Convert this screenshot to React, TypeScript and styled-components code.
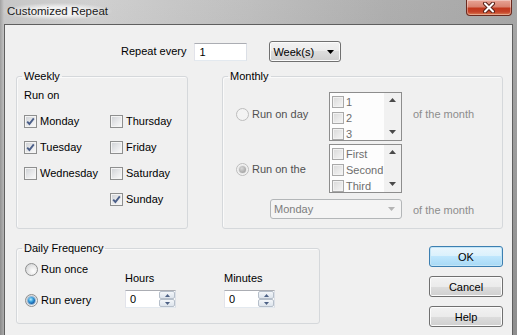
import React from "react";
import styled, { createGlobalStyle, css } from "styled-components";

const GlobalStyle = createGlobalStyle`
  html, body { margin: 0; padding: 0; background: #a9a9a9; }
  #root { width: 517px; height: 335px; }
`;

const FONT = `"Liberation Sans", Arial, sans-serif`;

const Window = styled.div`
  width: 517px;
  height: 335px;
  overflow: hidden;
  display: flex;
  flex-direction: column;
  font-family: ${FONT};
  font-size: 11px;
  color: #000;
  background:
    linear-gradient(to bottom, rgba(255,255,255,0.06), rgba(0,0,0,0.12)),
    linear-gradient(to right, #9c9c9c 0px, #c4c4c4 4px, #cdcdcd 18%, #bdbdbd 45%, #aaaaaa 75%, #a2a2a2 100%);
`;

const TitleBar = styled.div`
  height: 24px;
  flex: none;
  display: flex;
  align-items: flex-start;
`;

const Title = styled.div`
  margin: 3px 0 0 3px;
  padding: 1px 4px 2px 4px;
  font-size: 11.5px;
  line-height: 14px;
  color: #1a1a1a;
  background: radial-gradient(ellipse at center, rgba(255,255,255,0.75) 35%, rgba(255,255,255,0) 72%);
`;

const CloseButton = styled.div`
  margin-left: auto;
  margin-right: 5px;
  width: 46px;
  height: 16px;
  box-sizing: border-box;
  border: 1px solid #6a2a1f;
  border-top: none;
  border-radius: 0 0 4px 4px;
  display: flex;
  align-items: center;
  justify-content: center;
  background: linear-gradient(#e8a596 0%, #d98370 45%, #c2391d 55%, #c5432a 80%, #dd8458 100%);
  box-shadow: inset 0 0 0 1px rgba(255,255,255,0.35);
`;

const Client = styled.div`
  flex: 1;
  margin: 0 4px;
  border: 1px solid #5f5f5f;
  border-bottom: none;
  background: #f0f0f0;
  padding: 16px 9px 0 11px;
  display: flex;
  flex-direction: column;
`;

const TopRow = styled.div`
  display: flex;
  align-items: center;
  height: 21px;
  padding-left: 105px;
`;

const Text = styled.span<{ $tone?: "normal" | "dim" | "faint" }>`
  line-height: 13px;
  white-space: nowrap;
  color: ${(p) => (p.$tone === "dim" ? "#505050" : p.$tone === "faint" ? "#8d8d8d" : "#000")};
`;

const TextInput = styled.div`
  margin-left: 8px;
  width: 53px;
  height: 18px;
  box-sizing: border-box;
  border: 1px solid #abadb3;
  border-left-color: #e2e3ea;
  border-right-color: #dbdfe6;
  border-bottom-color: #e3e9ef;
  background: #fff;
  padding-left: 4px;
  display: flex;
  align-items: center;
`;

const Combo = styled.div<{ $disabled?: boolean; $w: number }>`
  width: ${(p) => p.$w}px;
  height: ${(p) => (p.$disabled ? 20 : 21)}px;
  box-sizing: border-box;
  display: flex;
  align-items: center;
  justify-content: space-between;
  padding: 0 6px 0 3px;
  border-radius: 3px;
  ${(p) =>
    p.$disabled
      ? css`
          border: 1px solid #b3b6b8;
          background: #f4f4f4;
          color: #7d7d7d;
        `
      : css`
          border: 1px solid #707070;
          background: linear-gradient(#f2f2f2 0%, #ebebeb 50%, #dddddd 50%, #cfcfcf 100%);
          box-shadow: inset 0 0 0 1px #fbfbfb;
        `}
`;

const WeekCombo = styled(Combo)`
  margin-left: 22px;
`;

const MonthCombo = styled(Combo)`
  grid-column: 1 / 3;
  justify-self: end;
  align-self: end;
`;

const GroupsRow = styled.div`
  display: flex;
  justify-content: space-between;
  margin-top: 8px;
`;

const Group = styled.fieldset<{ $w: number; $pb: number }>`
  width: ${(p) => p.$w}px;
  box-sizing: border-box;
  margin: 0;
  min-width: 0;
  padding: 6px 7px ${(p) => p.$pb}px 7px;
  border: 1px solid #d5d8db;
  border-radius: 3px;
  box-shadow: inset 1px 1px 0 #fafafa;
`;

const Legend = styled.legend`
  padding: 0 2px;
  margin-left: -2px;
  font-size: 11px;
  line-height: 13px;
  color: #000;
`;

const DayGrid = styled.div`
  display: grid;
  grid-template-columns: 86px 1fr;
  grid-auto-rows: 16px;
  row-gap: 10px;
  margin-top: 11px;
`;

const CheckLabel = styled.label<{ $col?: number }>`
  display: flex;
  align-items: center;
  gap: 3px;
  ${(p) => (p.$col ? `grid-column: ${p.$col};` : "")}
`;

const Box = styled.span<{ $size: number; $disabled?: boolean }>`
  flex: none;
  width: ${(p) => p.$size}px;
  height: ${(p) => p.$size}px;
  box-sizing: border-box;
  display: flex;
  align-items: center;
  justify-content: center;
  border: 1px solid ${(p) => (p.$disabled ? "#a9a9a9" : "#8e8f8f")};
  box-shadow: inset 0 0 0 1px ${(p) => (p.$disabled ? "#f2f2f2" : "#f4f4f4")};
  background: ${(p) =>
    p.$disabled
      ? "linear-gradient(135deg, #d9d9d9, #f6f6f6)"
      : "linear-gradient(135deg, #cdd0d4 0%, #e6e7e9 50%, #fbfbfb 100%)"};
`;

const Circle = styled.span<{ $disabled?: boolean }>`
  flex: none;
  width: 13px;
  height: 13px;
  box-sizing: border-box;
  border-radius: 50%;
  display: flex;
  align-items: center;
  justify-content: center;
  border: 1px solid ${(p) => (p.$disabled ? "#bdbdbd" : "#8e8f8f")};
  background: ${(p) =>
    p.$disabled
      ? "#f3f3f3"
      : "radial-gradient(circle at 65% 65%, #ffffff 0%, #e9e9e9 45%, #c9cbce 100%)"};
`;

const Dot = styled.span<{ $disabled?: boolean }>`
  width: 7px;
  height: 7px;
  border-radius: 50%;
  background: ${(p) =>
    p.$disabled
      ? "radial-gradient(circle at 40% 35%, #d8d8d8 0%, #a8a8a8 70%, #8f8f8f 100%)"
      : "radial-gradient(circle at 40% 35%, #b9ecff 0%, #3ea6e0 35%, #125ea8 70%, #0b3a73 100%)"};
  box-shadow: 0 0 0 1px ${(p) => (p.$disabled ? "#e6e6e6" : "#8fb5d6")};
`;

const MonthGrid = styled.div`
  display: grid;
  grid-template-columns: 99px 73px 1fr;
  grid-template-rows: 49px 49px 23px;
  row-gap: 3px;
  margin-top: 3px;
`;

const RadioLabel = styled.label<{ $pad?: number; $dy?: number }>`
  display: flex;
  align-items: center;
  gap: 3px;
  padding-left: ${(p) => p.$pad ?? 0}px;
  margin-top: ${(p) => p.$dy ?? 0}px;
`;

const MonthText = styled.div<{ $dy?: number }>`
  display: flex;
  align-items: center;
  padding-left: 11px;
  margin-top: ${(p) => p.$dy ?? 0}px;
`;

const ListBox = styled.div`
  box-sizing: border-box;
  width: 73px;
  height: 49px;
  border: 1px solid #8d8d8d;
  background: #fdfdfd;
  display: flex;
  overflow: hidden;
`;

const ListItems = styled.div`
  flex: 1;
  padding: 1px 0 0 2px;
  display: flex;
  flex-direction: column;
  overflow: hidden;
`;

const ListItem = styled.div`
  height: 16px;
  flex: none;
  display: flex;
  align-items: center;
  gap: 2px;
  color: #6d6d6d;
`;

const ScrollBar = styled.div`
  width: 17px;
  flex: none;
  background: #f1f1f1;
  display: flex;
  flex-direction: column;
  justify-content: space-between;
  align-items: center;
  padding: 5px 0 6px;
  box-sizing: border-box;
`;

const BottomRow = styled.div`
  display: flex;
  justify-content: space-between;
  align-items: flex-start;
  margin-top: 13px;
`;

const DailyBody = styled.div`
  display: flex;
  align-items: flex-end;
`;

const RadioCol = styled.div`
  width: 101px;
  flex: none;
  display: flex;
  flex-direction: column;
  gap: 15px;
`;

const RadioRow = styled(RadioLabel)`
  height: 16px;
  padding-left: 1px;
`;

const FieldCol = styled.div<{ $w: number }>`
  width: ${(p) => p.$w}px;
  flex: none;
  display: flex;
  flex-direction: column;
  gap: 5px;
`;

const Spin = styled.div`
  width: 51px;
  height: 18px;
  box-sizing: border-box;
  border: 1px solid #abadb3;
  border-left-color: #e2e3ea;
  border-right-color: #dbdfe6;
  border-bottom-color: #e3e9ef;
  background: #fff;
  display: flex;
  align-items: center;
  padding-left: 4px;
  justify-content: space-between;
`;

const SpinButtons = styled.div`
  width: 16px;
  height: 16px;
  display: flex;
  flex-direction: column;
`;

const SpinBtn = styled.div`
  flex: 1;
  box-sizing: border-box;
  border: 1px solid #b6bfca;
  border-radius: 2px;
  background: linear-gradient(#f3f6f9, #dde4ec);
  display: flex;
  align-items: center;
  justify-content: center;
`;

const ButtonCol = styled.div`
  display: flex;
  flex-direction: column;
  gap: 9px;
  margin-top: 4px;
`;

const Button = styled.button<{ $default?: boolean }>`
  width: 74px;
  height: 21px;
  box-sizing: border-box;
  padding: 0;
  font-family: ${FONT};
  font-size: 11px;
  color: #000;
  border-radius: 3px;
  ${(p) =>
    p.$default
      ? css`
          border: 1px solid #3c7fb1;
          background: linear-gradient(#eaf6fd 0%, #d9f0fc 50%, #bee6fd 50%, #a7d9f5 100%);
          box-shadow: inset 0 0 0 1px #c4e5f6;
        `
      : css`
          border: 1px solid #707070;
          background: linear-gradient(#f2f2f2 0%, #ebebeb 50%, #dddddd 50%, #cfcfcf 100%);
          box-shadow: inset 0 0 0 1px #fbfbfb;
        `}
`;

const CheckMark = () => (
  <svg width="9" height="9" viewBox="0 0 9 9">
    <path d="M1.2 4.6 L3.4 7 L7.8 1.4" fill="none" stroke="#4b5f89" strokeWidth="1.9" />
  </svg>
);

const Tri = ({ up, color, w = 7 }: { up?: boolean; color: string; w?: number }) => {
  const h = Math.ceil(w / 2);
  return (
    <svg width={w} height={h} viewBox={`0 0 ${w} ${h}`}>
      <polygon points={up ? `0,${h} ${w},${h} ${w / 2},0` : `0,0 ${w},0 ${w / 2},${h}`} fill={color} />
    </svg>
  );
};

const Check = ({ label, checked, col }: { label: string; checked?: boolean; col?: number }) => (
  <CheckLabel $col={col}>
    <Box $size={13}>{checked && <CheckMark />}</Box>
    <Text>{label}</Text>
  </CheckLabel>
);

const List = ({ items }: { items: string[] }) => (
  <ListBox>
    <ListItems>
      {items.map((it) => (
        <ListItem key={it}>
          <Box $size={12} $disabled />
          <span>{it}</span>
        </ListItem>
      ))}
    </ListItems>
    <ScrollBar>
      <Tri up color="#4a4a4a" w={7} />
      <Tri color="#4a4a4a" w={7} />
    </ScrollBar>
  </ListBox>
);

const SpinField = ({ label, value, w }: { label: string; value: string; w: number }) => (
  <FieldCol $w={w}>
    <Text>{label}</Text>
    <Spin>
      <span>{value}</span>
      <SpinButtons>
        <SpinBtn>
          <Tri up color="#4d6185" w={5} />
        </SpinBtn>
        <SpinBtn>
          <Tri color="#4d6185" w={5} />
        </SpinBtn>
      </SpinButtons>
    </Spin>
  </FieldCol>
);

export default function App() {
  return (
    <>
      <GlobalStyle />
      <Window>
        <TitleBar>
          <Title>Customized Repeat</Title>
          <CloseButton>
            <svg width="14" height="11" viewBox="0 0 14 11">
              <path d="M3 1.5 L11 9.5 M11 1.5 L3 9.5" stroke="#5a2218" strokeWidth="4" strokeLinecap="round" />
              <path d="M3 1.5 L11 9.5 M11 1.5 L3 9.5" stroke="#ffffff" strokeWidth="2" strokeLinecap="round" />
            </svg>
          </CloseButton>
        </TitleBar>
        <Client>
          <TopRow>
            <Text>Repeat every</Text>
            <TextInput>1</TextInput>
            <WeekCombo $w={72}>
              <span>Week(s)</span>
              <Tri color="#000" w={7} />
            </WeekCombo>
          </TopRow>

          <GroupsRow>
            <Group $w={172} $pb={9}>
              <Legend>Weekly</Legend>
              <Text>Run on</Text>
              <DayGrid>
                <Check label="Monday" checked />
                <Check label="Thursday" />
                <Check label="Tuesday" checked />
                <Check label="Friday" />
                <Check label="Wednesday" />
                <Check label="Saturday" />
                <Check label="Sunday" checked col={2} />
              </DayGrid>
            </Group>

            <Group $w={281} $pb={9}>
              <Legend>Monthly</Legend>
              <MonthGrid>
                <RadioLabel $pad={6} $dy={-4}>
                  <Circle $disabled />
                  <Text $tone="dim">Run on day</Text>
                </RadioLabel>
                <List items={["1", "2", "3"]} />
                <MonthText $dy={-4}>
                  <Text $tone="faint">of the month</Text>
                </MonthText>
                <RadioLabel $pad={6} $dy={2}>
                  <Circle $disabled>
                    <Dot $disabled />
                  </Circle>
                  <Text $tone="dim">Run on the</Text>
                </RadioLabel>
                <List items={["First", "Second", "Third"]} />
                <span />
                <MonthCombo $w={132} $disabled>
                  <span>Monday</span>
                  <Tri color="#b4b4b4" w={7} />
                </MonthCombo>
                <MonthText $dy={5}>
                  <Text $tone="faint">of the month</Text>
                </MonthText>
              </MonthGrid>
            </Group>
          </GroupsRow>

          <BottomRow>
            <Group $w={304} $pb={15}>
              <Legend>Daily Frequency</Legend>
              <DailyBody>
                <RadioCol>
                  <RadioRow>
                    <Circle />
                    <Text>Run once</Text>
                  </RadioRow>
                  <RadioRow>
                    <Circle>
                      <Dot />
                    </Circle>
                    <Text>Run every</Text>
                  </RadioRow>
                </RadioCol>
                <SpinField label="Hours" value="0" w={99} />
                <SpinField label="Minutes" value="0" w={51} />
              </DailyBody>
            </Group>
            <ButtonCol>
              <Button $default>OK</Button>
              <Button>Cancel</Button>
              <Button>Help</Button>
            </ButtonCol>
          </BottomRow>
        </Client>
      </Window>
    </>
  );
}
